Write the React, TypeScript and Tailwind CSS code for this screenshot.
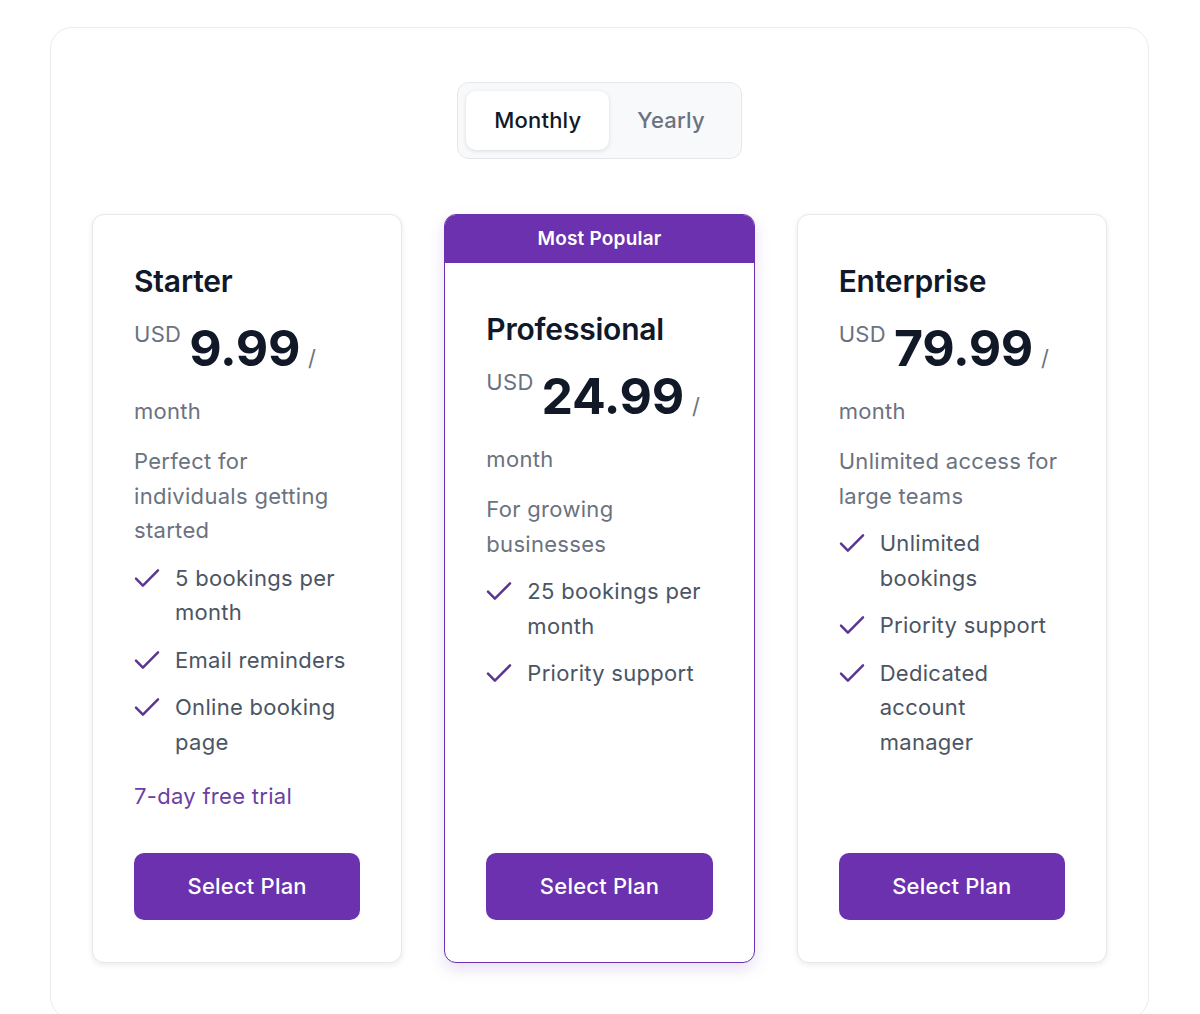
import React from "react";

type Plan = {
  name: string;
  price: string;
  desc: string;
  features: string[];
  popular?: boolean;
  trial?: string;
};

const plans: Plan[] = [
  {
    name: "Starter",
    price: "9.99",
    desc: "Perfect for individuals getting started",
    features: ["5 bookings per month", "Email reminders", "Online booking page"],
    trial: "7-day free trial",
  },
  {
    name: "Professional",
    price: "24.99",
    desc: "For growing businesses",
    features: ["25 bookings per month", "Priority support"],
    popular: true,
  },
  {
    name: "Enterprise",
    price: "79.99",
    desc: "Unlimited access for large teams",
    features: ["Unlimited bookings", "Priority support", "Dedicated account manager"],
  },
];

function CheckIcon() {
  return (
    <svg
      width="22"
      height="16"
      viewBox="4 6 16 11"
      fill="none"
      stroke="#5b3590"
      strokeWidth="1.8"
      strokeLinecap="round"
      strokeLinejoin="round"
      overflow="visible"
    >
      <path d="M20 6 9 17l-5-5" />
    </svg>
  );
}

function Card({ plan }: { plan: Plan }) {
  return (
    <div
      className={
        plan.popular
          ? "flex flex-col overflow-hidden rounded-[12px] border border-[#6b31ae] bg-white shadow-[0_6px_16px_rgba(107,49,174,0.16)]"
          : "flex flex-col overflow-hidden rounded-[12px] border border-[#e7e7ea] bg-white shadow-[0_2px_6px_rgba(0,0,0,0.08)]"
      }
    >
      {plan.popular && (
        <div className="flex h-[48px] items-center justify-center bg-[#6b31ae] text-[19px] font-semibold tracking-[0.2px] text-white">
          Most Popular
        </div>
      )}
      <div className="flex flex-1 flex-col px-[41px] pb-[42px] pt-[48px]">
        <div className="flex-1">
          <h3 className="text-[30px] font-semibold leading-[36px] tracking-[-0.2px] text-[#111827]">
            {plan.name}
          </h3>
          <div className="mt-[24px] flex items-baseline">
            <span className="self-start text-[22px] leading-none tracking-[0.3px] text-[#6b7280]">USD</span>
            <span className="ml-[8px] text-[50px] font-bold leading-none tracking-[-0.3px] text-[#111827]">
              {plan.price}
            </span>
            <span className="ml-[8px] text-[22px] leading-none text-[#6b7280]">/</span>
          </div>
          <div className="mt-[21px] text-[22px] leading-[34px] tracking-[0.3px] text-[#6b7280]">month</div>
          <p className="mt-[16px] text-[22px] leading-[34.5px] tracking-[0.3px] text-[#6b7280]">{plan.desc}</p>
          <ul className="mt-[13px] flex flex-col gap-[13px]">
            {plan.features.map((f) => (
              <li key={f} className="flex items-start">
                <div className="ml-[2px] flex h-[34px] w-[22px] shrink-0 items-center">
                  <CheckIcon />
                </div>
                <span className="ml-[17px] pr-[6px] text-[22px] leading-[34.5px] tracking-[0.3px] text-[#4b5563]">
                  {f}
                </span>
              </li>
            ))}
          </ul>
          {plan.trial && (
            <div className="mt-[20px] text-[22px] leading-[34px] tracking-[0.3px] text-[#6b3fa2]">{plan.trial}</div>
          )}
        </div>
        <button className="mt-[40px] flex h-[67px] w-full items-center justify-center rounded-[10px] bg-[#6b31ae] text-[22px] font-medium tracking-[0.2px] text-white">
          Select Plan
        </button>
      </div>
    </div>
  );
}

export default function App() {
  return (
    <div
      className="min-h-screen bg-white pt-[27px]"
      style={{ fontFamily: "Inter, 'Noto Sans', sans-serif" }}
    >
      <div className="ml-[50px] mr-[51px] rounded-[22px] border border-[#ececec] bg-white px-[41px] pb-[55px] pt-[54px]">
        <div className="flex justify-center">
          <div className="flex rounded-[12px] border border-[#e5e7eb] bg-[#f8f9fb] p-[8px]">
            <button className="h-[59px] rounded-[10px] bg-white px-[28px] text-[22px] font-medium tracking-[0.2px] text-[#111827] shadow-[0_1px_4px_rgba(0,0,0,0.12)]">
              Monthly
            </button>
            <button className="h-[59px] px-[28px] text-[22px] font-medium tracking-[0.2px] text-[#6b7280]">Yearly</button>
          </div>
        </div>
        <div className="mt-[55px] grid grid-cols-3 gap-[42px]">
          {plans.map((p) => (
            <Card key={p.name} plan={p} />
          ))}
        </div>
      </div>
    </div>
  );
}
